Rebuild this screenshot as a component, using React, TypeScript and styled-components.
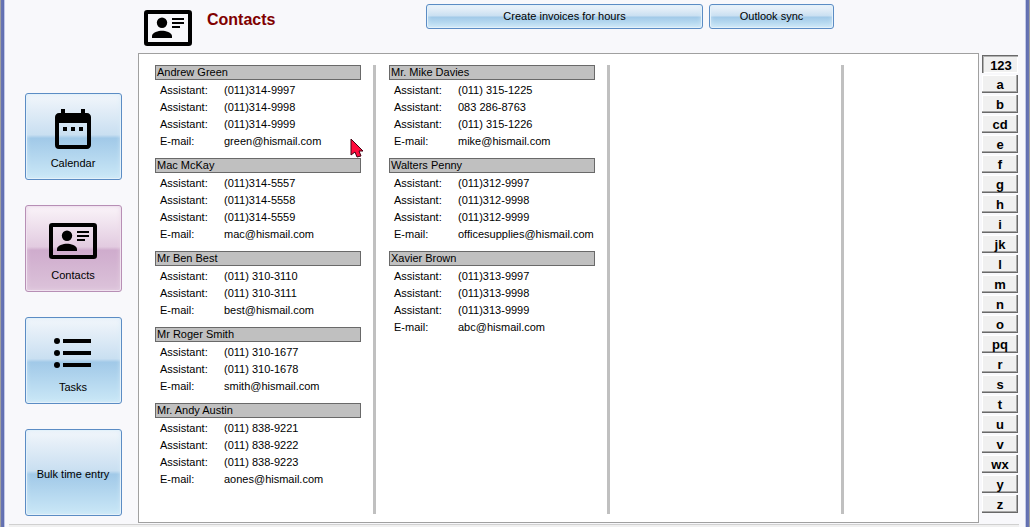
import React from "react";
import styled, { createGlobalStyle, css } from "styled-components";

const GlobalStyle = createGlobalStyle`
  * { box-sizing: border-box; }
  body {
    margin: 0;
    background: #f8f8fb;
    color: #000;
    font: 11px/17px "Liberation Sans", Arial, sans-serif;
  }
`;

const Window = styled.div`
  display: grid;
  grid-template-columns: 5px 1fr 5px;
  min-height: 100vh;
`;

const Edge = styled.div<{ $side: "left" | "right" }>`
  background: linear-gradient(
    to ${(p) => p.$side},
    #c3c9e6 1px,
    #5f6db0 1px,
    #6a76b4 4px,
    #a0a0a0 4px
  );
`;

const Body = styled.div`
  display: flex;
  flex-direction: column;
`;

const Content = styled.div`
  flex: 1;
  display: grid;
  grid-template-columns: 97px minmax(0, 1fr) 36px;
  grid-template-rows: 53px 1fr;
  padding: 0 7px 1px 20px;
`;

const Header = styled.header`
  grid-column: 2 / -1;
  display: grid;
  grid-template-columns: 48px 204px 1fr;
  column-gap: 15px;
  align-items: start;
  padding: 4px 0 0 22px;
`;

const Title = styled.h1`
  margin: 6px 0 0;
  color: #800000;
  font: bold 16px/20px "Liberation Sans", Arial, sans-serif;
`;

const Actions = styled.div`
  display: flex;
  gap: 6px;
`;

const blue = css`
  border-color: #5b8cc4;
  background: linear-gradient(#f2f6fb, #c9dff1 48%, #a1c9e8 52%, #cbe8f7);
  box-shadow: inset 0 0 0 1px #e3f1fa, inset 0 0 5px #d9ebf8;
`;

const pink = css`
  border-color: #b78fb5;
  background: linear-gradient(#faf4f9, #e2cbe0 48%, #cfaccd 52%, #dcc3da);
  box-shadow: inset 0 0 0 1px #f0e2ef, inset 0 0 5px #e8d6e7;
`;

const GlossButton = styled.button<{ $active?: boolean }>`
  display: flex;
  align-items: center;
  justify-content: center;
  padding: 0;
  border: 1px solid;
  border-radius: 3px;
  color: #000;
  font: inherit;
  ${(p) => (p.$active ? pink : blue)}
`;

const ActionButton = styled(GlossButton)<{ $wide?: boolean }>`
  width: ${(p) => (p.$wide ? 277 : 125)}px;
  height: 25px;
`;

const Nav = styled.nav`
  grid-column: 1;
  display: flex;
  flex-direction: column;
  gap: 25px;
  padding-top: 40px;
`;

const NavButton = styled(GlossButton)`
  flex-direction: column;
  gap: 2px;
  height: 87px;
  padding: 4px 1px 0 0;
`;

const Panel = styled.main`
  position: relative;
  display: flex;
  margin-left: 16px;
  margin-right: 3px;
  padding: 11px 0 8px 3px;
  overflow: hidden;
  border: 1px solid #a0a0a0;
  background: #fff;
`;

const Column = styled.div`
  flex: none;
  width: 234px;
  padding: 0 12px 0 13px;
  border-right: 3px solid #c0c0c0;
`;

const Card = styled.section`
  margin-bottom: 8px;
`;

const CardName = styled.h2`
  margin: 0 0 2px;
  padding-left: 1px;
  border: 1px solid #696969;
  background: #c0c0c0;
  font: inherit;
  line-height: 13px;
`;

const Details = styled.dl`
  display: grid;
  grid-template-columns: 64px 1fr;
  margin: 0;
  padding-left: 5px;
`;

const Cell = styled.dd`
  margin: 0;
  white-space: nowrap;
`;

const Index = styled.div`
  display: flex;
  flex-direction: column;
  gap: 2px;
  padding-top: 2px;
`;

const IndexButton = styled.button<{ $pressed: boolean }>`
  height: 18px;
  padding: ${(p) => (p.$pressed ? "3px 0 0 2px" : "1px 0 0")};
  border: 0;
  background: #f0f0f0;
  color: #000;
  font: bold 13px/16px "Liberation Sans", Arial, sans-serif;
  box-shadow: ${(p) =>
    p.$pressed
      ? "inset 1px 1px #696969, inset 2px 2px #b0b0b0, inset -1px -1px #fff"
      : "inset -1px -1px #696969, inset -2px -2px #a8a8a8, inset 1px 1px #fff"};
`;

const Footer = styled.footer`
  height: 3px;
  margin: 0 6px 0 4px;
  border-top: 1px solid #d0d0d0;
  background: #f0f0f0;
`;

const Pointer = styled.svg`
  position: absolute;
  left: 211px;
  top: 84px;
`;

const ContactIcon = () => (
  <svg width="48" height="48" viewBox="0 0 24 24" aria-hidden="true">
    <path
      fillRule="evenodd"
      d="M1.6 3h20.8Q24 3 24 4.600v14.8q0 1.600-1.600 1.600H1.600Q0 21 0 19.400V4.600Q0 3 1.600 3zM2 5v14h20V5z"
    />
    <circle cx="9" cy="9.400" r="2.600" />
    <path d="M4 17v-1c0-1.700 3.300-2.600 5-2.600s5 .9 5 2.600v1zM14 7h6v1h-6zM14 9h6v1h-6zM14 11h4v1h-4z" />
  </svg>
);

const CalendarIcon = () => (
  <svg width="48" height="48" viewBox="0 0 24 24" aria-hidden="true">
    <path d="M9 11H7v2h2v-2zm4 0h-2v2h2v-2zm4 0h-2v2h2v-2zm2-7h-1V2h-2v2H8V2H6v2H5c-1.110 0-1.990.9-1.990 2L3 20a2 2 0 0 0 2 2h14c1.100 0 2-.9 2-2V6c0-1.100-.9-2-2-2zm0 16H5V9h14v11z" />
  </svg>
);

const TasksIcon = () => (
  <svg width="48" height="48" viewBox="0 0 24 24" aria-hidden="true">
    {[6, 12, 18].map((y) => (
      <g key={y}>
        <circle cx="4" cy={y} r="1.5" />
        <rect x="7" y={y - 1} width="14" height="2" />
      </g>
    ))}
  </svg>
);

type Contact = { name: string; phones: string[]; email: string };

const columns: Contact[][] = [
  [
    { name: "Andrew Green", phones: ["(011)314-9997", "(011)314-9998", "(011)314-9999"], email: "green@hismail.com" },
    { name: "Mac McKay", phones: ["(011)314-5557", "(011)314-5558", "(011)314-5559"], email: "mac@hismail.com" },
    { name: "Mr Ben Best", phones: ["(011) 310-3110", "(011) 310-3111"], email: "best@hismail.com" },
    { name: "Mr Roger Smith", phones: ["(011) 310-1677", "(011) 310-1678"], email: "smith@hismail.com" },
    { name: "Mr. Andy Austin", phones: ["(011) 838-9221", "(011) 838-9222", "(011) 838-9223"], email: "aones@hismail.com" },
  ],
  [
    { name: "Mr. Mike Davies", phones: ["(011) 315-1225", "083 286-8763", "(011) 315-1226"], email: "mike@hismail.com" },
    { name: "Walters Penny", phones: ["(011)312-9997", "(011)312-9998", "(011)312-9999"], email: "officesupplies@hismail.com" },
    { name: "Xavier Brown", phones: ["(011)313-9997", "(011)313-9998", "(011)313-9999"], email: "abc@hismail.com" },
  ],
  [],
];

const tabs = "123 a b cd e f g h i jk l m n o pq r s t u v wx y z".split(" ");

const ContactCard = ({ contact }: { contact: Contact }) => (
  <Card>
    <CardName>{contact.name}</CardName>
    <Details>
      {contact.phones.map((phone) => (
        <React.Fragment key={phone}>
          <Cell as="dt">Assistant:</Cell>
          <Cell>{phone}</Cell>
        </React.Fragment>
      ))}
      <Cell as="dt">E-mail:</Cell>
      <Cell>{contact.email}</Cell>
    </Details>
  </Card>
);

export default function App() {
  return (
    <Window>
      <GlobalStyle />
      <Edge $side="left" />
      <Body>
        <Content>
          <Header>
            <ContactIcon />
            <Title>Contacts</Title>
            <Actions>
              <ActionButton $wide>Create invoices for hours</ActionButton>
              <ActionButton>Outlook sync</ActionButton>
            </Actions>
          </Header>
          <Nav>
            <NavButton><CalendarIcon />Calendar</NavButton>
            <NavButton $active><ContactIcon />Contacts</NavButton>
            <NavButton><TasksIcon />Tasks</NavButton>
            <NavButton>Bulk time entry</NavButton>
          </Nav>
          <Panel>
            {columns.map((contacts, i) => (
              <Column key={i}>
                {contacts.map((c) => <ContactCard key={c.name} contact={c} />)}
              </Column>
            ))}
            <Pointer width="14" height="20" viewBox="0 0 14 20" aria-hidden="true">
              <path d="M1 1v16l4-3 2 5 4-1-2-5h4z" fill="#ff0a3c" stroke="#400010" />
            </Pointer>
          </Panel>
          <Index>
            {tabs.map((t, i) => (
              <IndexButton key={t} $pressed={i === 0}>{t}</IndexButton>
            ))}
          </Index>
        </Content>
        <Footer />
      </Body>
      <Edge $side="right" />
    </Window>
  );
}
